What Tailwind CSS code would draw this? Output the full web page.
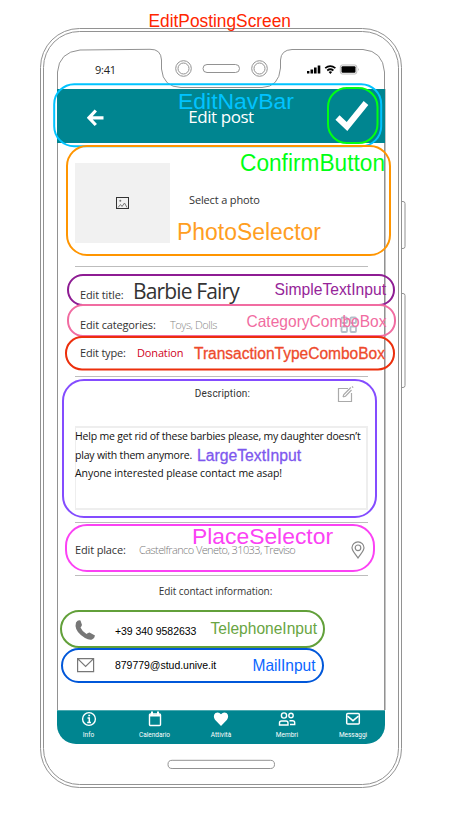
<!DOCTYPE html>
<html lang="en">
<head>
<meta charset="utf-8">
<title>Edit post</title>
<script src="https://cdn.jsdelivr.net/npm/@tailwindcss/browser@4"></script>
</head>
<body class="bg-white">
<div class="relative w-[466px] h-[820px] overflow-hidden bg-white pl-[57px] pt-[50px] font-['Open_Sans','Noto_Sans',sans-serif] text-[11px] leading-4 text-[#333]">

  <!-- Phone body -->
  <svg class="absolute inset-0" width="466" height="820" fill="none" stroke="#929292" stroke-width="1">
    <rect x="40.5" y="28.5" width="361" height="759" rx="39"/>
    <rect x="43.5" y="31.5" width="355" height="753" rx="36"/>
    <path d="M401.500 201.500v-18M401.500 201.500v-0M402 201.500h1q2 0 2 2v43q0 2-2 2h-1.500M401.500 293.500h1.500q2 0 2 2v90q0 2-2 2h-1.500"/>
    <path d="M57.500 710V72Q59 52 80 50L150 49.300Q161 49 161.500 60V69Q163 87 181 87.500H262Q279 87 280.500 68V60Q281 50 292 49.500H363Q383 51 384.500 72V710"/>
  </svg>
  <svg class="absolute inset-0" width="466" height="820" fill="none" stroke="#929292">
    <circle cx="183.500" cy="68.500" r="7.800"/><circle cx="183.500" cy="68.500" r="5.500"/>
    <circle cx="259.500" cy="68.500" r="7.800"/><circle cx="259.500" cy="68.500" r="5.500"/>
    <rect x="203" y="64.500" width="36.500" height="8" rx="4"/>
    <rect x="168" y="760.300" width="106.500" height="8.200" rx="4.100"/>
    <path d="M385.500 89V710" stroke="#c4c4c4"/>
  </svg>

  <main class="relative flex w-[328px] h-[694px] flex-col">
    <div class="flex h-[39px] items-center justify-between pl-[38px] pr-[25px]">
      <span class="text-[11px] tracking-[-0.2px] text-[#222] pt-px">9:41</span>
      <svg width="53" height="12" fill="#000">
        <rect x="0" y="7" width="2.400" height="2.500"/><rect x="3.500" y="5.500" width="2.600" height="4"/><rect x="7" y="3.500" width="2.600" height="6"/><rect x="10.700" y="1.500" width="2.600" height="8"/>
        <g fill="none" stroke="#000" stroke-width="1.700"><path d="M18.200 4.100q5-4 10.200 0M20.200 6.500q3.200-2.500 6.200 0"/></g><path d="M21.600 7.900q1.800-1.300 3.500 0l-1.700 2z"/>
        <rect x="33.300" y="1" width="16.500" height="9" rx="2" fill="none" stroke="#bbb"/><rect x="34.500" y="2.200" width="14" height="6.600" rx="1"/><path d="M51 4q1.500 1.500 0 3z" fill="#aaa"/>
      </svg>
    </div>

    <header class="grid h-[54px] shrink-0 grid-cols-[68px_1fr_68px] items-center bg-[#008590] text-white">
      <svg class="ml-[30px] mt-1" width="17" height="18" fill="none" stroke="#fff" stroke-width="3.200"><path d="M8.800 1.500 2 8.800l6.800 7.200M2 8.800h14.500"/></svg>
      <h1 class="text-center text-[17px] leading-6 tracking-[-0.45px] pt-[2px] whitespace-nowrap">Edit post</h1>
      <svg class="ml-[18px] -mt-px" width="36" height="32" fill="none" stroke="#fff" stroke-width="6"><path d="m2.500 17.500 9.500 9L31 3"/></svg>
    </header>

    <section class="flex h-[567px] shrink-0 flex-col pl-[18px] pr-[17px]">
      <div class="flex h-[124px] shrink-0 gap-[19px] border-b border-[#bdbdbd] pt-5">
        <div class="flex h-20 w-[95px] items-center justify-center bg-[#f1f1f1]">
          <svg width="13" height="12" fill="none" stroke="#333"><rect x=".5" y=".5" width="12" height="11"/><path d="M2 10.500l2.500-3 1.500 2 2.500-3.500 2.500 4.500" stroke="#777"/><circle cx="4.300" cy="3.800" r="1" fill="#777" stroke="none"/></svg>
        </div>
        <span class="mt-[29px] tracking-[-0.15px]">Select a photo</span>
      </div>

      <div class="flex h-[38px] shrink-0 items-baseline pl-[5px] pt-[9px]">
        <span class="w-[53px] tracking-[-0.12px]">Edit title:</span>
        <span class="text-[21px] leading-[30px] tracking-[-0.85px] whitespace-nowrap">Barbie Fairy</span>
      </div>
      <div class="flex h-[38px] shrink-0 items-center pl-[5px] pr-[10px] pt-[2px]">
        <span class="w-[90px] tracking-[-0.15px]">Edit categories:</span>
        <span class="text-[#888] font-light tracking-[-0.45px]">Toys, Dolls</span>
        <svg class="ml-auto" width="18" height="18" fill="none" stroke="#b4bfca" stroke-width="1.800"><rect x="1.500" y="1.500" width="5.500" height="5.500" rx="1"/><rect x="10.500" y="1.500" width="5.500" height="5.500" rx="1"/><rect x="1.500" y="10.500" width="5.500" height="5.500" rx="1"/><rect x="10.500" y="10.500" width="5.500" height="5.500" rx="1"/></svg>
      </div>
      <div class="flex h-[34px] shrink-0 items-start border-b border-[#bdbdbd] pl-[5px] pt-[2px]">
        <span class="w-[57px] tracking-[-0.2px]">Edit type:</span>
        <span class="text-[#d0021b] tracking-[-0.15px]">Donation</span>
      </div>

      <div class="grid h-[49px] shrink-0 grid-cols-[30px_1fr_30px] pt-[9px]">
        <h2 class="col-start-2 pl-[2px] text-center font-[Roboto,sans-serif] text-[10px] tracking-[0.2px]">Description:</h2>
        <svg width="17" height="17" class="-ml-px" fill="none" stroke="#aaa" stroke-width="1.200"><path d="M11 2.500H1.500v13h13V7M6 11l.8-2.500 7-7M6 11l2.500-.8 6-6.200M15 .5l1.200 1.200"/></svg>
      </div>
      <div class="h-[84px] shrink-0 whitespace-nowrap border-2 border-l border-[#eee] text-[10.500px] leading-[18.500px] text-[#111]">
        <p class="-mt-px -ml-px tracking-[-0.2px]">Help me get rid of these barbies please, my daughter doesn’t</p>
        <p class="-ml-px tracking-[-0.2px]">play with them anymore.</p>
        <p class="-ml-px tracking-[-0.07px]">Anyone interested please contact me asap!</p>
      </div>
      <div class="h-[13px] shrink-0 border-b border-[#bdbdbd]"></div>

      <div class="flex h-[53px] shrink-0 items-center border-b border-[#bdbdbd] pr-[3px] pt-[2px]">
        <span class="w-[64px] tracking-[-0.15px]">Edit place:</span>
        <span class="font-light text-[#777] tracking-[-0.58px] whitespace-nowrap">Castelfranco Veneto, 31033, Treviso</span>
        <svg class="ml-auto" width="14" height="18" fill="none" stroke="#888" stroke-width="1.200"><path d="M7 17C4.500 13 1 10 1 6.800a6 6 0 0 1 12 0C13 10 9.500 13 7 17z"/><circle cx="7" cy="6.800" r="2.800"/></svg>
      </div>
      <h2 class="h-[35px] shrink-0 pt-[7px] pr-[12px] text-center text-[10px] tracking-[-0.07px]">Edit contact information:</h2>

      <div class="flex h-[38px] shrink-0 items-center font-['Liberation_Sans',sans-serif] text-black">
        <svg width="40" height="22" viewBox="0 0 40 22" fill="#777"><path d="M1 3.500Q3 .5 5.500 1.500L7 6Q6 8 5.500 8.500q2 4.500 6 6.500 1.500-1.500 3-1.500l5.500 3q0 2-3 4-3 .7-7-1.500Q1 13.500.5 7z"/></svg>
        <span class="pt-[2px] text-[10.500px] tracking-[-0.05px]">+39 340 9582633</span>
      </div>
      <div class="flex h-[32px] shrink-0 items-center font-['Liberation_Sans',sans-serif] text-black">
        <svg width="40" height="16" fill="none" stroke="#777" stroke-width="1.200"><path d="M2.600 1.600h16v13h-16zL10.600 9.500l8-7.900"/></svg>
        <span class="text-[10.500px] tracking-[-0.03px]">879779@stud.unive.it</span>
      </div>
    </section>

    <nav class="flex h-[34px] shrink-0 justify-between rounded-b-[19px] border-t border-[#4ba9b0] bg-[#008590] font-[Roboto,sans-serif] text-[6.500px] leading-[8px] text-white">
      <div class="flex w-[63px] flex-col items-center gap-[4px]"><svg width="16" height="16" fill="none" stroke="#fff" stroke-width="1.400"><circle cx="8" cy="8" r="6.400"/><path d="M6.500 7h1.800v4M6.200 11.400h3.800M7.300 4.500h1.800" stroke-width="1.500"/></svg><span>Info</span></div>
      <div class="flex w-[69px] flex-col items-center gap-[4px]"><svg width="16" height="16" fill="none" stroke="#fff" stroke-width="1.400"><rect x="2.500" y="3" width="11" height="11.500" rx="1"/><path d="M2.500 4.500h11M5 .5v3M11 .5v3" stroke-width="2"/></svg><span>Calendario</span></div>
      <div class="flex w-[64px] flex-col items-center gap-[4px]"><svg width="16" height="16" fill="#fff"><path d="M8 15 2 8.700Q-.5 4.500 2.500 2.100 5.500.3 8 3.300q2.500-3 5.500-1.200Q16.500 4.500 14 8.700z"/></svg><span>Attività</span></div>
      <div class="flex w-[68px] flex-col items-center gap-[4px]"><svg width="18" height="16" fill="none" stroke="#fff" stroke-width="1.400"><circle cx="6" cy="4.500" r="2.600"/><circle cx="13" cy="4.500" r="2.200"/><path d="M1.500 14v-2q0-2 2-2h4.500q2 0 2 2v2zM11.500 9.700h3q2.200 0 2.200 2v1.800H12"/></svg><span>Membri</span></div>
      <div class="flex w-[64px] flex-col items-center gap-[4px]"><svg width="16" height="16" fill="none" stroke="#fff" stroke-width="1.500"><rect x="1.700" y="2.400" width="12.600" height="10.600" rx="1"/><path d="m2.500 5.200 5.500 4.500 5.500-4.500"/></svg><span>Messaggi</span></div>
    </nav>
  </main>

  <!-- Component annotations -->
  <svg class="absolute inset-0 font-['Liberation_Sans',sans-serif]" width="466" height="820">
    <g fill="none" stroke-width="2">
      <rect x="54.200" y="84.200" width="327" height="62" rx="20" stroke="#00c3ff"/>
      <rect x="328" y="88" width="49.500" height="55" rx="19" stroke="#00ff14"/>
      <rect x="67" y="146" width="323" height="109" rx="20" stroke="#ff9500"/>
      <rect x="68" y="275" width="326" height="30" rx="15" stroke="#8e1c93"/>
      <rect x="68" y="305" width="327" height="31" rx="15" stroke="#f16ca1"/>
      <rect x="66" y="337" width="328" height="32.500" rx="16" stroke="#ec2f0c"/>
      <rect x="63" y="380" width="313" height="137" rx="21" stroke="#844cff"/>
      <rect x="66" y="525" width="308" height="46" rx="21" stroke="#fb42f4"/>
      <rect x="61" y="611" width="263" height="36" rx="18" stroke="#62a03a"/>
      <rect x="62" y="649" width="261" height="33" rx="16.500" stroke="#0057d9"/>
    </g>
    <text x="148.500" y="27" font-size="17.500" textLength="142.500" lengthAdjust="spacingAndGlyphs" fill="#ff2600">EditPostingScreen</text>
    <text x="178" y="109" font-size="22.500" textLength="116" lengthAdjust="spacingAndGlyphs" fill="#00c3ff">EditNavBar</text>
    <text x="240" y="171" font-size="23" textLength="145" lengthAdjust="spacingAndGlyphs" fill="#00ff14">ConfirmButton</text>
    <text x="177" y="239.500" font-size="23" textLength="144" lengthAdjust="spacingAndGlyphs" fill="#ff9e22">PhotoSelector</text>
    <text x="274.500" y="295" font-size="16.500" textLength="111.500" lengthAdjust="spacingAndGlyphs" fill="#962599">SimpleTextInput</text>
    <text x="246.500" y="326.500" font-size="16.500" textLength="140" lengthAdjust="spacingAndGlyphs" fill="#f16ca1">CategoryComboBox</text>
    <text x="194" y="358.500" font-size="16" textLength="191" lengthAdjust="spacingAndGlyphs" fill="#ee4a2c" stroke="#ee4a2c" stroke-width=".3">TransactionTypeComboBox</text>
    <text x="197" y="460.500" font-size="16" textLength="104" lengthAdjust="spacingAndGlyphs" fill="#7d57ee" stroke="#7d57ee" stroke-width=".3">LargeTextInput</text>
    <text x="192" y="544" font-size="22.500" textLength="141" lengthAdjust="spacingAndGlyphs" fill="#fb42f4">PlaceSelector</text>
    <text x="210.500" y="634" font-size="16.500" textLength="106.500" lengthAdjust="spacingAndGlyphs" fill="#69a542">TelephoneInput</text>
    <text x="252.500" y="671" font-size="16.500" textLength="63" lengthAdjust="spacingAndGlyphs" fill="#0a66ff">MailInput</text>
  </svg>
</div>
</body>
</html>
